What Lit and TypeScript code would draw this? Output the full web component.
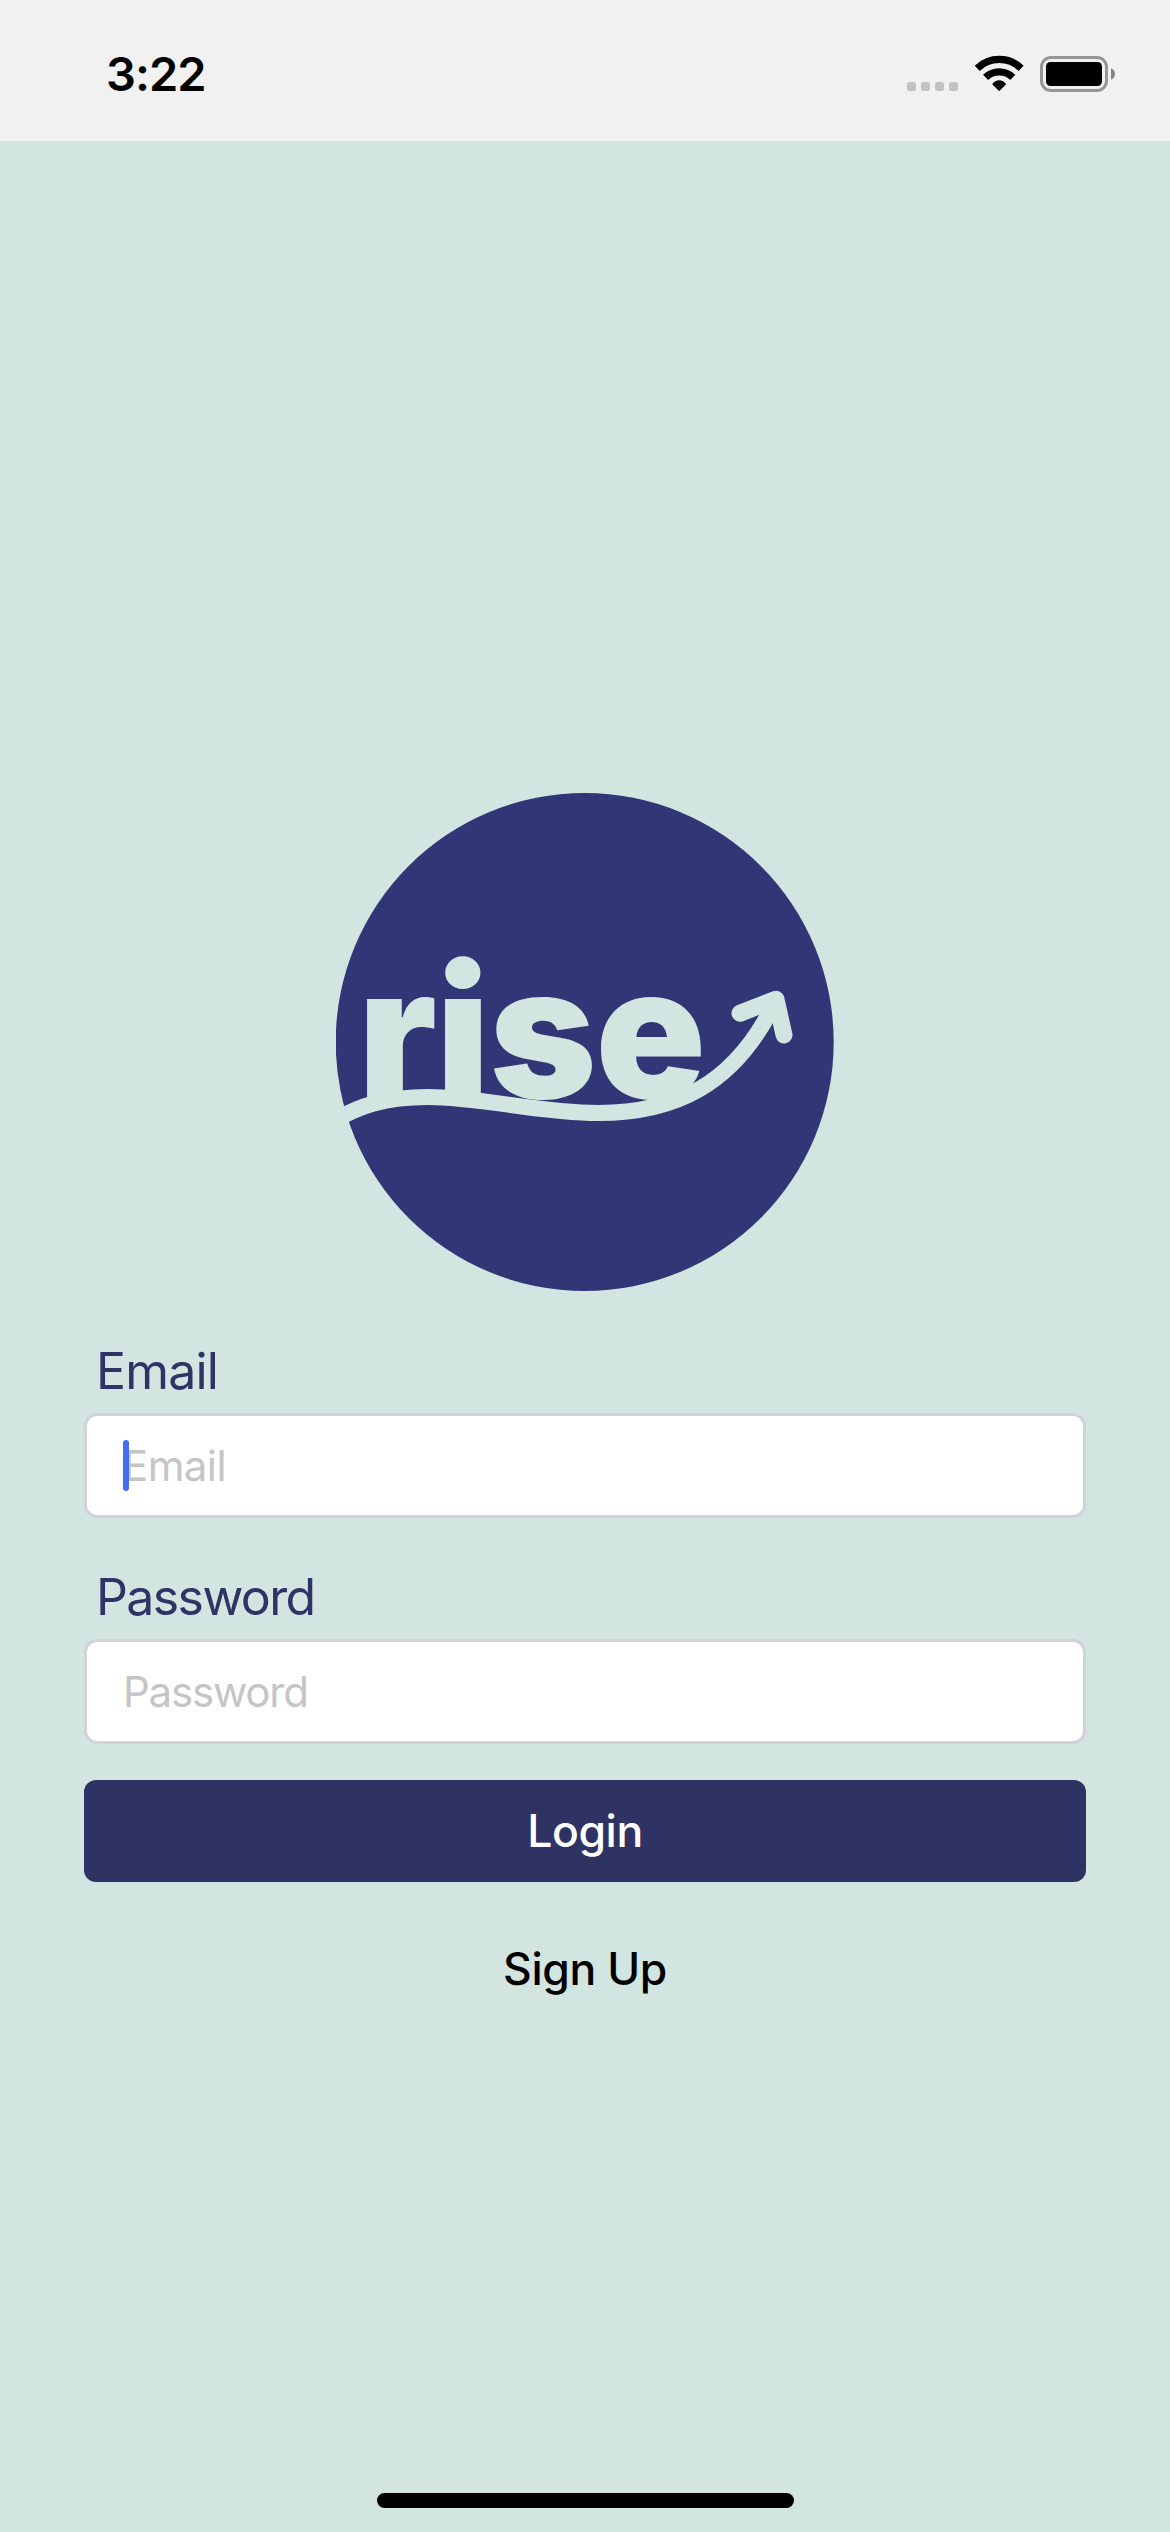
import { LitElement, html, css } from "lit";
import { customElement, property } from "lit/decorators.js";

@customElement("status-bar")
class StatusBar extends LitElement {
  static styles = css`
    :host {
      display: flex;
      justify-content: space-between;
      height: 141px;
      box-sizing: border-box;
      padding: 0 55px 0 106px;
      background: #f1f1f1;
    }
    .time {
      margin-top: 44px;
      font-size: 47px;
      line-height: 60px;
      font-weight: 580;
      letter-spacing: -1px;
      color: #000;
    }
    .icons {
      display: flex;
      align-items: flex-start;
      padding-top: 55px;
    }
    .cell { margin: 27px 17px 0 0; display: flex; gap: 5px; }
    .dot { width: 9px; height: 9px; border-radius: 2.5px; background: #c3c3c3; }
    .wifi { display: block; margin-right: 16px; }
    .battery { display: block; margin-top: 1px; }
  `;

  render() {
    return html`
      <span class="time">3:22</span>
      <div class="icons">
        <div class="cell">
          <span class="dot"></span><span class="dot"></span><span class="dot"></span><span class="dot"></span>
        </div>
        <svg class="wifi" width="49" height="37" viewBox="0 0 49 37">
          <g fill="none" stroke="#000" stroke-width="7.3">
            <path d="M2.3 13.3A31.5 31.5 0 0 1 46.1 13.3" />
            <path d="M10.6 22.4A19.5 19.5 0 0 1 37.8 22.4" />
          </g>
          <path d="M17.2 29.2Q20 25.3 24.2 25.3T31.2 29.2L24.9 35.6Q24.2 36.3 23.5 35.6Z" />
        </svg>
        <svg class="battery" width="75" height="36" viewBox="0 0 75 36">
          <rect x="1.5" y="1.5" width="65" height="33" rx="9.5" fill="none" stroke="#959595" stroke-width="3" />
          <rect x="6" y="6" width="56" height="24" rx="4.5" />
          <path d="M71 12.2Q75 13.8 75 18T71 23.8Z" fill="#858585" />
        </svg>
      </div>
    `;
  }
}

@customElement("rise-logo")
class RiseLogo extends LitElement {
  static styles = css`
    :host { display: block; width: 498px; height: 498px; }
    .logo { display: block; }
    .word { font-family: Inter, "Liberation Sans", sans-serif; font-weight: 900; font-size: 182px; }
  `;

  render() {
    return html`
      <svg class="logo" width="498" height="498" viewBox="336 793 498 498">
        <circle cx="584.7" cy="1042" r="249" fill="#313676" />
        <text class="word" x="358 436 489.5 595.5" y="1097.5" fill="#d2e5e0">rise</text>
        <g fill="none" stroke="#d2e5e0">
          <path d="M332 1122C358 1106 385 1097 428 1097C480 1097 540 1113 598 1113C676 1113 733 1084 772 1008" stroke-width="16" />
          <path d="M740 1013.2L776 999.3L784 1035" stroke-width="17" stroke-linecap="round" stroke-linejoin="round" />
        </g>
      </svg>
    `;
  }
}

@customElement("form-field")
class FormField extends LitElement {
  @property() label = "";
  @property({ reflect: true }) type = "text";
  @property({ type: Boolean }) active = false;

  static styles = css`
    :host { display: flex; flex-direction: column; gap: 12px; }
    .label {
      padding-left: 12px;
      font-size: 50px;
      line-height: 60px;
      letter-spacing: -0.8px;
      color: #2f3365;
    }
    .box { position: relative; display: flex; height: 105px; }
    .input {
      flex: 1;
      min-width: 0;
      box-sizing: border-box;
      border: 3px solid #d0d3da;
      border-radius: 13px;
      padding: 0 36px;
      background: #fff;
      font: inherit;
      font-size: 42px;
      letter-spacing: -0.6px;
      outline: none;
    }
    .input::placeholder { color: #c5c5c7; opacity: 1; }
    :host([type="password"]) .label { letter-spacing: -1.6px; }
    :host([type="password"]) .input { letter-spacing: -1.2px; }
    .caret {
      position: absolute;
      left: 39px;
      top: 27px;
      width: 6px;
      height: 51px;
      border-radius: 3px;
      background: #446df2;
    }
  `;

  render() {
    return html`
      <label class="label" for="input">${this.label}</label>
      <div class="box">
        <input class="input" id="input" type=${this.type} placeholder=${this.label} />
        ${this.active ? html`<span class="caret"></span>` : null}
      </div>
    `;
  }
}

@customElement("app-root")
class AppRoot extends LitElement {
  static styles = css`
    :host {
      display: flex;
      flex-direction: column;
      height: 2532px;
      background: #d2e5e0;
      font-family: Inter, "Liberation Sans", sans-serif;
    }
    .content {
      flex: 1;
      display: flex;
      flex-direction: column;
      padding: 652px 84px 0;
    }
    .logo { align-self: center; margin-bottom: 50px; }
    .fields { display: flex; flex-direction: column; gap: 49px; }
    .button {
      height: 102px;
      margin: 36px 0 0;
      padding: 0;
      border: 0;
      border-radius: 12px;
      background: none;
      font: inherit;
      font-size: 44.5px;
      font-weight: 500;
      letter-spacing: -0.4px;
      color: #000;
    }
    .primary { background: #2f3363; color: #fff; }
    .home {
      align-self: center;
      width: 417px;
      height: 15px;
      margin-bottom: 24px;
      border-radius: 8px;
      background: #000;
    }
  `;

  render() {
    return html`
      <status-bar></status-bar>
      <main class="content">
        <rise-logo class="logo"></rise-logo>
        <div class="fields">
          <form-field label="Email" active></form-field>
          <form-field label="Password" type="password"></form-field>
        </div>
        <button class="button primary">Login</button>
        <button class="button">Sign Up</button>
      </main>
      <div class="home"></div>
    `;
  }
}
